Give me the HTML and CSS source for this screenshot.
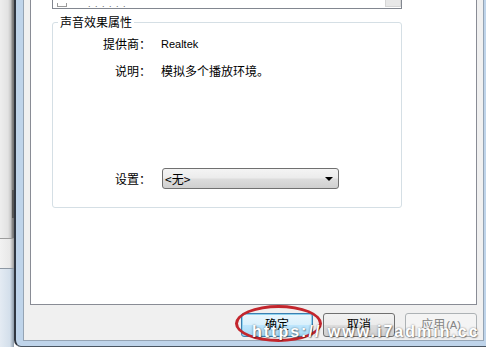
FILE: index.html
```html
<!DOCTYPE html>
<html lang="zh-CN">
<head>
<meta charset="utf-8">
<title>声音效果属性</title>
<link rel="stylesheet" href="styles.css">
</head>
<body>
<div class="screen">
  <div class="backdrop">
    <div class="bd-top"><span class="bd-btn"></span></div>
    <div class="bd-mid"></div>
    <div class="bd-low"></div>
  </div>
  <div class="window">
    <div class="dialog">
      <div class="tabpanel">
        <div class="listbox">
          <span class="li-icon"></span>
          <span class="li-dots">. . . . . .</span>
          <span class="li-scroll"></span>
        </div>
        <fieldset class="group">
          <legend class="legend">声音效果属性</legend>
          <div class="row r1"><span class="label">提供商：</span><span class="value latin">Realtek</span></div>
          <div class="row r2"><span class="label">说明：</span><span class="value">模拟多个播放环境。</span></div>
          <div class="row r3"><span class="label">设置：</span>
            <div class="combo"><span class="combo-text">&lt;无&gt;</span><span class="arrow"></span></div>
          </div>
        </fieldset>
      </div>
      <div class="footer">
        <button class="btn default">确定</button>
        <button class="btn">取消</button>
        <button class="btn disabled">应用<span class="latin-s">(A)</span></button>
      </div>
    </div>
  </div>
  <div class="annot"></div>
  <div class="watermark">https:// www.i7admin.cc</div>
</div>
</body>
</html>
```
FILE: styles.css
```css
html, body {
  margin: 0;
  padding: 0;
}
body {
  width: 486px;
  height: 347px;
  overflow: hidden;
  font-family: "Noto Sans CJK SC", "Liberation Sans", sans-serif;
  font-size: 12px;
  color: #000;
}
.screen {
  position: relative;
  display: flex;
  width: 486px;
  height: 347px;
  overflow: hidden;
}
.backdrop {
  flex: none;
  width: 14px;
  display: flex;
  flex-direction: column;
  background: linear-gradient(to right, #eeeeee 0, #e2e2e2 8px, #c4c4c4 11px, #8c8c8c 12px, #707070 14px);
}
.bd-top {
  flex: none;
  height: 238px;
  position: relative;
}
.bd-btn {
  position: absolute;
  left: 12px;
  top: 190px;
  width: 2px;
  height: 28px;
  background: #555;
}
.bd-mid {
  flex: none;
  height: 29px;
  border-top: 1px solid #9c9c9c;
  background: linear-gradient(to right, #f2f2f2 0, #e8e8e8 10px, #9a9a9a 14px);
}
.bd-low {
  flex: 1;
  border-top: 1px solid #8d97a3;
  background: linear-gradient(to right, #e4ebf3 0, #d3dfeb 10px, #8d9aa8 14px);
}
.window {
  flex: none;
  width: 477px;
  height: 347px;
  box-sizing: border-box;
  display: flex;
  flex-direction: column;
  background: #bfd4ea;
  border-left: 2px solid #2f3640;
  border-bottom: 1px solid #4a5561;
  border-bottom-left-radius: 7px;
  padding: 0 7px 5px 7px;
}
.dialog {
  flex: 1;
  display: flex;
  flex-direction: column;
  background: #f0f0f0;
  border: 1px solid #95a4b4;
  border-top: none;
  padding: 0 6px;
  min-height: 0;
}
.tabpanel {
  flex: 1;
  display: flex;
  flex-direction: column;
  align-items: flex-start;
  background: #ffffff;
  border: 1px solid #898c95;
  border-top: none;
  padding-left: 21px;
}
.listbox {
  width: 350px;
  height: 9px;
  box-sizing: border-box;
  border: 1px solid #828790;
  border-top: none;
  display: flex;
  align-items: flex-end;
}
.li-icon {
  width: 8px;
  height: 3px;
  margin-left: 4px;
  margin-bottom: 1px;
  border: 1px solid #9a9a9a;
  border-top: none;
}
.li-dots {
  margin-left: 21px;
  font-family: "Liberation Sans", sans-serif;
  font-size: 9px;
  line-height: 8px;
  letter-spacing: 1px;
  color: #666;
}
.li-scroll {
  margin-left: auto;
  align-self: flex-start;
  width: 16px;
  height: 7px;
  box-sizing: border-box;
  background: #e8e8e8;
  border: 1px solid #d6d6d6;
  border-top: none;
}
.group {
  width: 350px;
  box-sizing: border-box;
  min-width: 0;
  margin: 5px 0 0 0;
  padding: 0 0 18px 0;
  border: 1px solid #d5dfe5;
  border-radius: 3px;
}
.legend {
  margin-left: 5px;
  padding: 0 2px;
  line-height: 16px;
  font-size: 12px;
}
.row {
  display: flex;
  align-items: center;
  line-height: 16px;
}
.r1 { margin-top: 6px; }
.r2 { margin-top: 11px; }
.r3 { margin-top: 89px; }
.label {
  width: 98px;
  flex: none;
  text-align: right;
}
.value {
  margin-left: 10px;
}
.latin {
  font-family: "Liberation Sans", sans-serif;
  font-size: 11px;
}
.combo {
  margin-left: 11px;
  width: 177px;
  height: 21px;
  box-sizing: border-box;
  border: 1px solid #707070;
  border-radius: 3px;
  background: linear-gradient(#f4f4f4 0, #ececec 45%, #dcdcdc 55%, #cfcfcf 100%);
  display: flex;
  align-items: center;
  padding: 0 5px 0 2px;
}
.combo-text {
  flex: 1;
  font-size: 12px;
}
.arrow {
  width: 0;
  height: 0;
  border-left: 4px solid transparent;
  border-right: 4px solid transparent;
  border-top: 4px solid #000;
}
.footer {
  flex: none;
  height: 35px;
  box-sizing: border-box;
  padding-top: 8px;
  display: flex;
  justify-content: flex-end;
  align-items: flex-start;
  gap: 10px;
}
.btn {
  width: 72px;
  height: 24px;
  box-sizing: border-box;
  margin: 0;
  padding: 0 0 2px 0;
  border: 1px solid #707070;
  border-radius: 3px;
  background: linear-gradient(#f2f2f2 0, #ebebeb 48%, #dddddd 52%, #cfcfcf 100%);
  font-family: "Noto Sans CJK SC", "Liberation Sans", sans-serif;
  font-size: 12px;
  line-height: 18px;
  color: #000;
}
.btn.default {
  border-color: #3c7fb1;
  box-shadow: inset 0 0 0 1px #8fd3ef;
  background: linear-gradient(#eaf6fd 0, #d9f0fc 48%, #bee6fd 52%, #a7d9f5 100%);
}
.btn.disabled {
  border-color: #adb2b5;
  background: #f4f4f4;
  color: #838383;
}
.latin-s {
  font-family: "Liberation Sans", sans-serif;
  font-size: 11px;
  margin-left: 1px;
}
.annot {
  position: absolute;
  left: 235px;
  top: 305px;
  width: 87px;
  height: 37px;
  box-sizing: border-box;
  border: 3px solid #c3262d;
  border-radius: 50%;
}
.watermark {
  position: absolute;
  left: 252px;
  top: 323px;
  font-family: "Liberation Sans", sans-serif;
  font-weight: bold;
  font-size: 16px;
  line-height: 18px;
  letter-spacing: 2px;
  white-space: nowrap;
  color: #ffffff;
  text-shadow: 0 0 2px rgba(0, 0, 0, 0.5), 1px 1px 1px rgba(0, 0, 0, 0.3);
}
```
